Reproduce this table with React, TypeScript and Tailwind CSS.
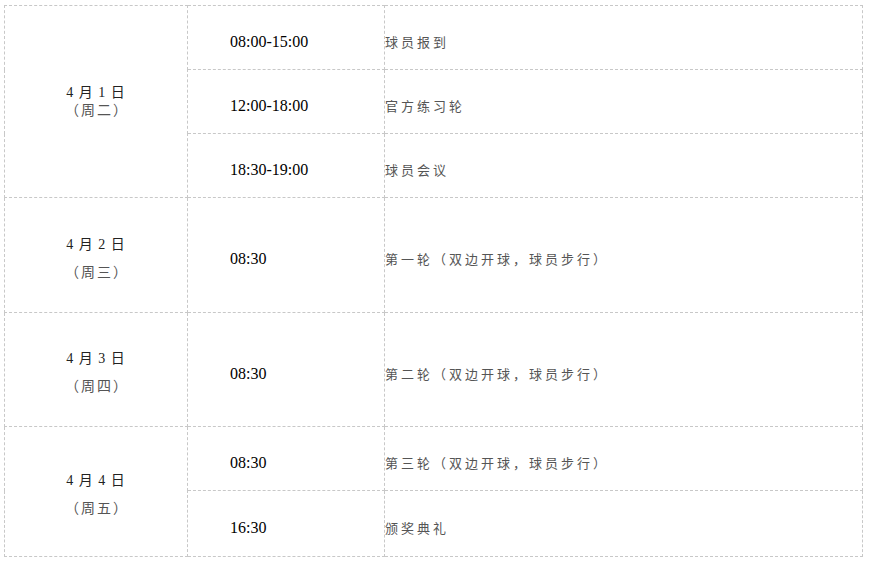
const rows = [
  {
    date: "4 月 1 日",
    week: "（周二）",
    tight: true,
    items: [
      { time: "08:00-15:00", text: "球员报到", h: "h-[64px]" },
      { time: "12:00-18:00", text: "官方练习轮", h: "h-[64px]" },
      { time: "18:30-19:00", text: "球员会议", h: "h-[64px]" },
    ],
  },
  {
    date: "4 月 2 日",
    week: "（周三）",
    items: [{ time: "08:30", text: "第一轮（双边开球，球员步行）", h: "h-[115px]" }],
  },
  {
    date: "4 月 3 日",
    week: "（周四）",
    items: [{ time: "08:30", text: "第二轮（双边开球，球员步行）", h: "h-[114px]" }],
  },
  {
    date: "4 月 4 日",
    week: "（周五）",
    items: [
      { time: "08:30", text: "第三轮（双边开球，球员步行）", h: "h-[64px]" },
      { time: "16:30", text: "颁奖典礼", h: "h-[66px]" },
    ],
  },
];

const cell = "border border-dashed border-[#c8c8c8] p-0 align-middle";

export default function App() {
  return (
    <div className="bg-white w-[869px] h-[564px] pl-[4px] pt-[5px]">
      <table className="border-collapse w-[858px] table-fixed">
        <colgroup>
          <col className="w-[183px]" />
          <col className="w-[197px]" />
          <col className="w-[478px]" />
        </colgroup>
        <tbody>
          {rows.map((r) =>
            r.items.map((it, i) => (
              <tr key={r.date + i} className={it.h}>
                {i === 0 && (
                  <td
                    rowSpan={r.items.length}
                    className={`${cell} text-center text-[14px] tracking-[1px] text-[#222] font-['Liberation_Serif','Noto_Sans_CJK_SC',serif]`}
                  >
                    <div className={r.tight ? "leading-[18px]" : "leading-[28px] pt-[7px]"}>
                      <p>{r.date}</p>
                      <p className="text-[#555] tracking-[2px] pl-[2px]">{r.week}</p>
                    </div>
                  </td>
                )}
                <td className={`${cell} pl-[42px] pt-[8px] text-[16px] text-black font-['Liberation_Serif',serif]`}>
                  {it.time}
                </td>
                <td className={`${cell} pt-[8px] text-[13px] tracking-[3px] text-[#555] font-['Noto_Sans_CJK_SC',sans-serif]`}>
                  {it.text}
                </td>
              </tr>
            ))
          )}
        </tbody>
      </table>
    </div>
  );
}
